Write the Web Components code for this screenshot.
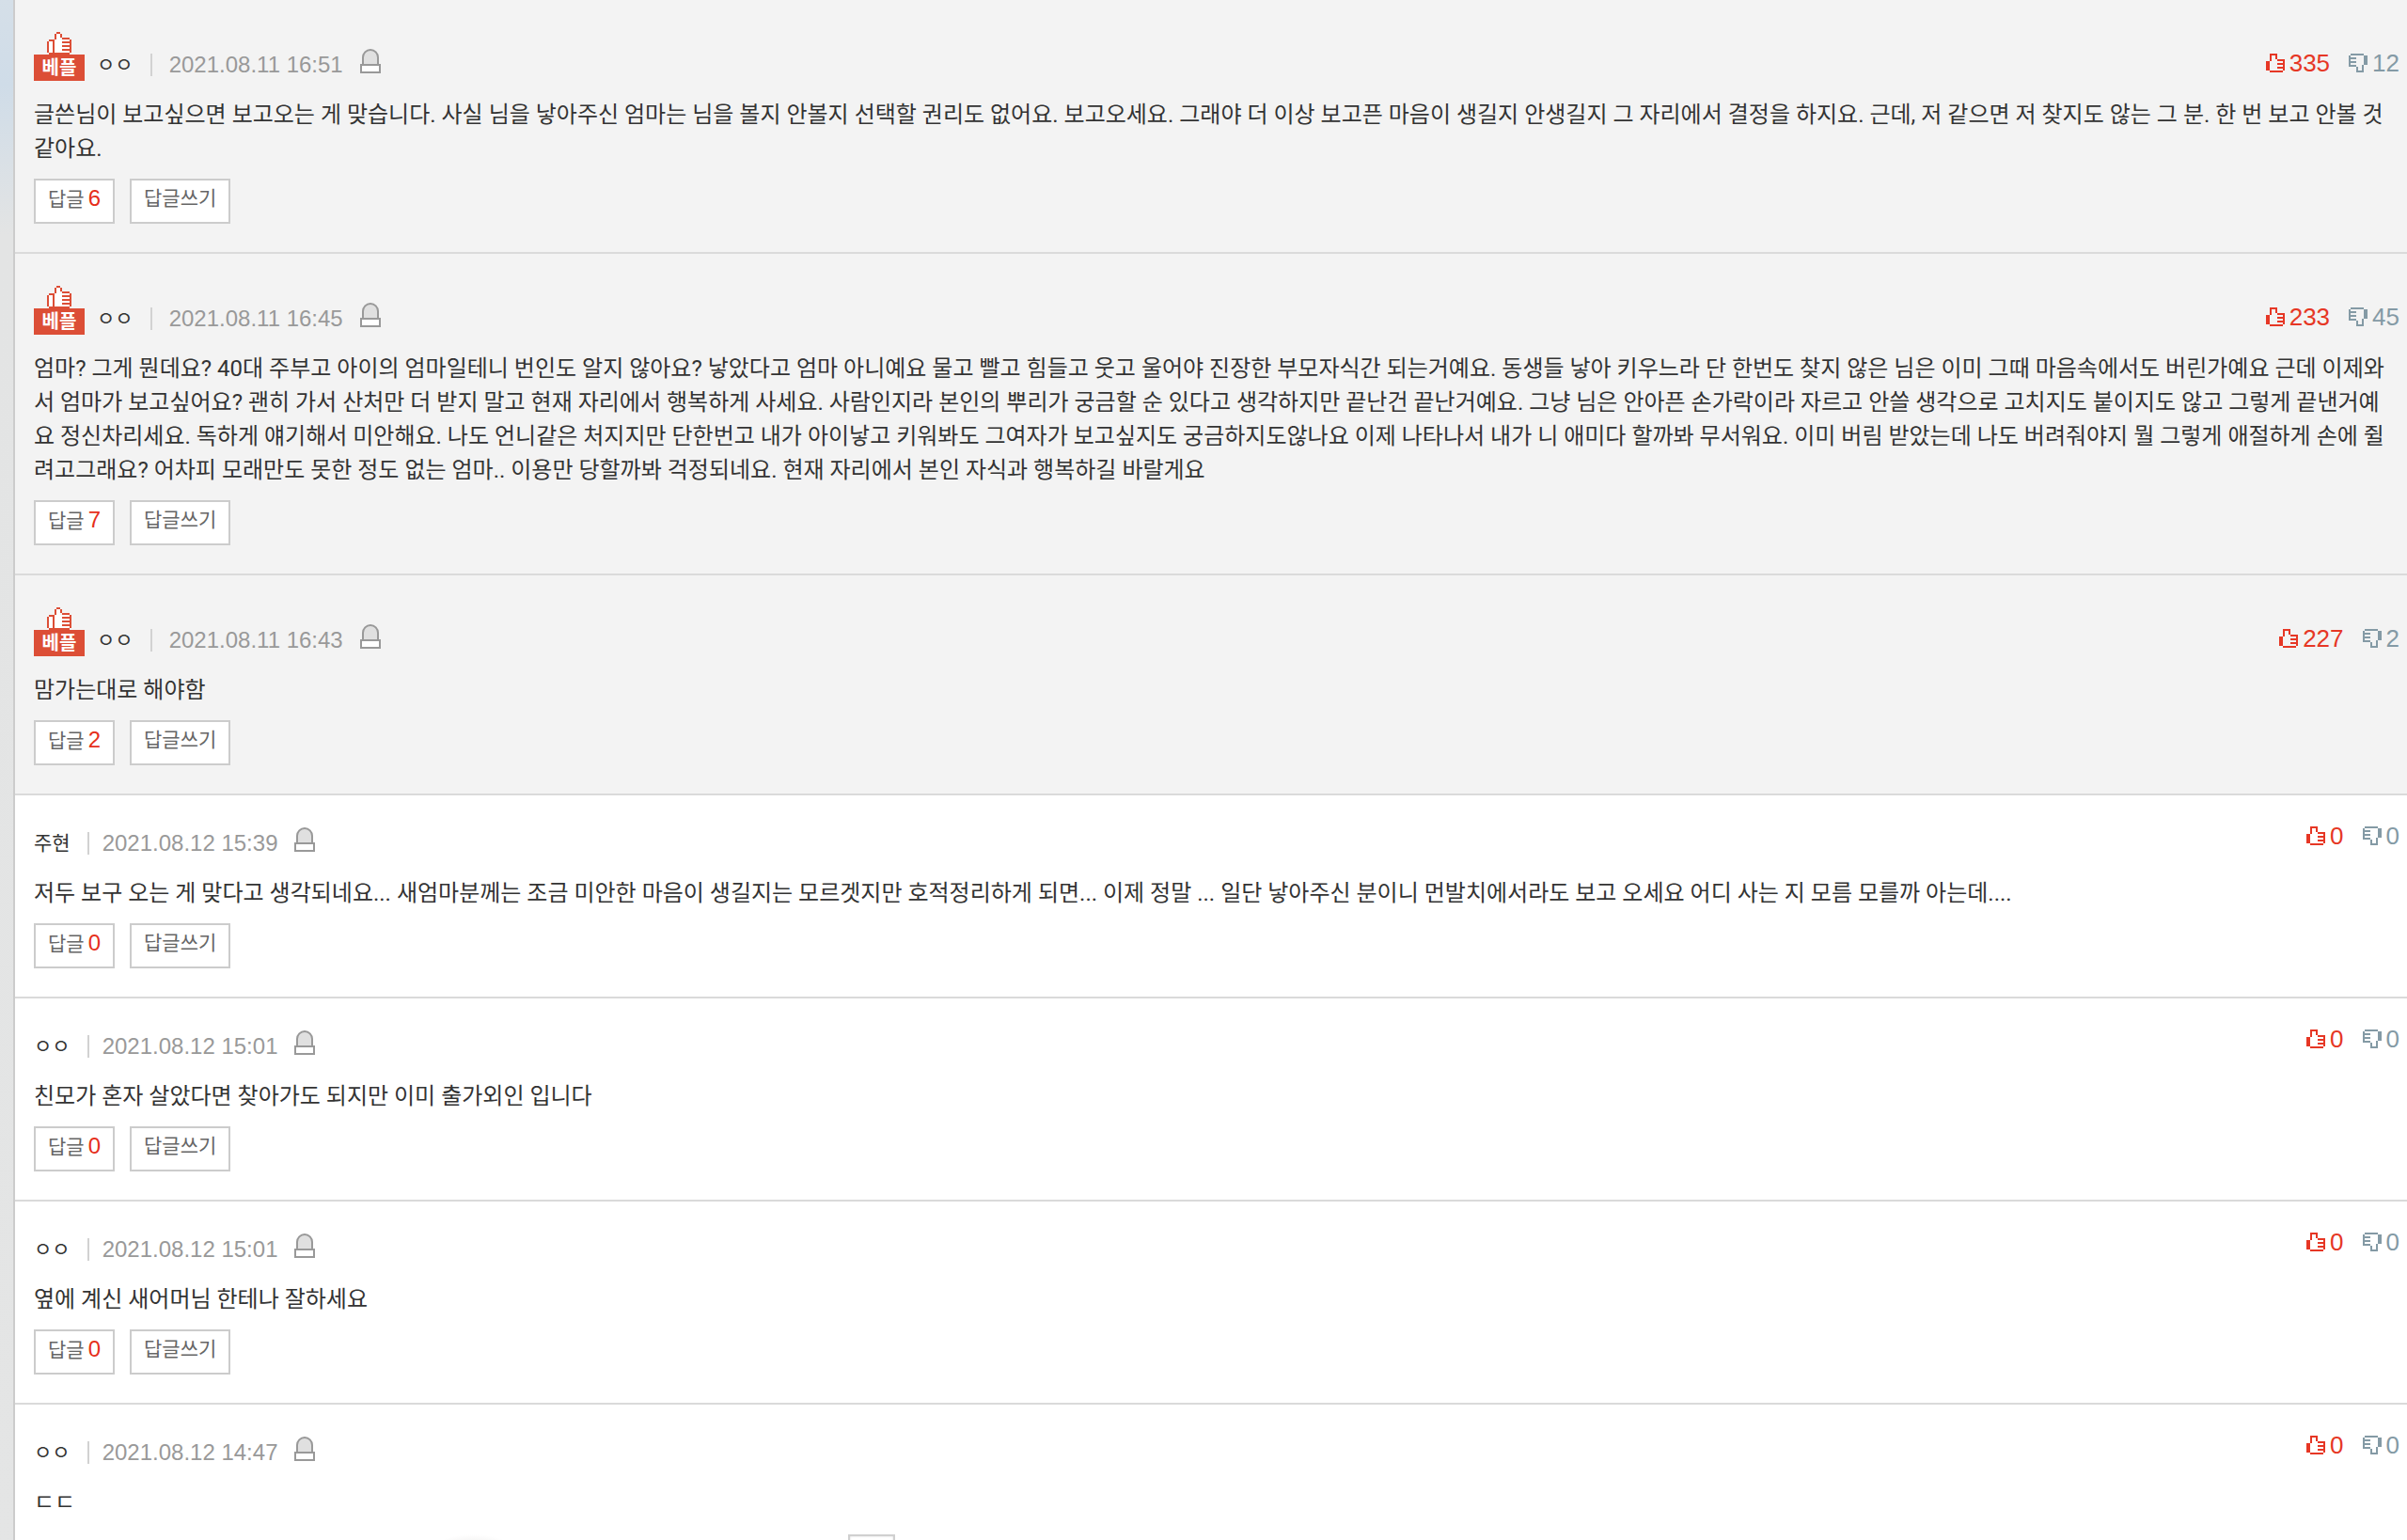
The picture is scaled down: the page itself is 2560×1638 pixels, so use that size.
<!DOCTYPE html>
<html lang="ko">
<head>
<meta charset="utf-8">
<title>댓글</title>
<style>
    body {
        margin: 0;
        background: #ffffff;
        font-family: "Liberation Sans", "Noto Sans CJK KR", sans-serif;
        color: #333333;
    }
</style>
</head>
<body>
<comment-list>
    <comment-item best author="ㅇㅇ" date="2021.08.11 16:51" up="335" down="12" replies="6">글쓴님이 보고싶으면 보고오는 게 맞습니다. 사실 님을 낳아주신 엄마는 님을 볼지 안볼지 선택할 권리도 없어요. 보고오세요. 그래야 더 이상 보고픈 마음이 생길지 안생길지 그 자리에서 결정을 하지요. 근데, 저 같으면 저 찾지도 않는 그 분. 한 번 보고 안볼 것 같아요.</comment-item>
    <comment-item best author="ㅇㅇ" date="2021.08.11 16:45" up="233" down="45" replies="7">엄마? 그게 뭔데요? 40대 주부고 아이의 엄마일테니 번인도 알지 않아요? 낳았다고 엄마 아니예요 물고 빨고 힘들고 웃고 울어야 진장한 부모자식간 되는거예요. 동생들 낳아 키우느라 단 한번도 찾지 않은 님은 이미 그때 마음속에서도 버린가예요 근데 이제와서 엄마가 보고싶어요? 괜히 가서 산처만 더 받지 말고 현재 자리에서 행복하게 사세요. 사람인지라 본인의 뿌리가 궁금할 순 있다고 생각하지만 끝난건 끝난거예요. 그냥 님은 안아픈 손가락이라 자르고 안쓸 생각으로 고치지도 붙이지도 않고 그렇게 끝낸거예요 정신차리세요. 독하게 얘기해서 미안해요. 나도 언니같은 처지지만 단한번고 내가 아이낳고 키워봐도 그여자가 보고싶지도 궁금하지도않나요 이제 나타나서 내가 니 애미다 할까봐 무서워요. 이미 버림 받았는데 나도 버려줘야지 뭘 그렇게 애절하게 손에 쥘려고그래요? 어차피 모래만도 못한 정도 없는 엄마.. 이용만 당할까봐 걱정되네요. 현재 자리에서 본인 자식과 행복하길 바랄게요</comment-item>
    <comment-item best author="ㅇㅇ" date="2021.08.11 16:43" up="227" down="2" replies="2">맘가는대로 해야함</comment-item>
    <comment-item author="주현" date="2021.08.12 15:39" up="0" down="0" replies="0">저두 보구 오는 게 맞다고 생각되네요... 새엄마분께는 조금 미안한 마음이 생길지는 모르겟지만 호적정리하게 되면... 이제 정말 ... 일단 낳아주신 분이니 먼발치에서라도 보고 오세요 어디 사는 지 모름 모를까 아는데....</comment-item>
    <comment-item author="ㅇㅇ" date="2021.08.12 15:01" up="0" down="0" replies="0">친모가 혼자 살았다면 찾아가도 되지만 이미 출가외인 입니다</comment-item>
    <comment-item author="ㅇㅇ" date="2021.08.12 15:01" up="0" down="0" replies="0">옆에 계신 새어머님 한테나 잘하세요</comment-item>
    <comment-item author="ㅇㅇ" date="2021.08.12 14:47" up="0" down="0">ㄷㄷ<banner-strip slot="banner"></banner-strip></comment-item>
</comment-list>

<script>
class bestBadge extends HTMLElement {
    constructor() {
        super();
        this.attachShadow({mode: 'open'});
    }

    getTemplate() {
        const template = document.createElement('template');
        template.innerHTML = `
            <svg width="26" height="24" viewBox="0 0 13 12" shape-rendering="crispEdges" aria-hidden="true">
                <path fill="#ffffff" d="M1 5h3V4h1V1h2v3h5v8H1z"/>
                <path fill="#dc4e36" d="M5 0h2v1H5zM4 1h1v3H4zM7 1h1v2H7zM8 3h4v1H8zM1 4h3v1H1zM0 5h1v6H0zM3 5h1v6H3zM12 4h1v7h-1zM8 5h4v1H8zM8 7h4v1H8zM8 9h4v1H8zM1 11h11v1H1z"/>
            </svg>
            <span>베플</span>
            ${this.getStyle()}
        `
        return template;
    }

    getStyle() {
        return `
            <style>
                :host {
                    display: flex;
                    flex-direction: column;
                    align-items: center;
                    width: 54px;
                    height: 52px;
                }
                svg {
                    display: block;
                }
                span {
                    width: 100%;
                    height: 28px;
                    line-height: 28px;
                    background-color: #dc4e36;
                    color: #ffffff;
                    font-size: 20px;
                    font-weight: bold;
                    text-align: center;
                }
            </style>
        `
    }

    connectedCallback() {
        this.shadowRoot.appendChild(this.getTemplate().content.cloneNode(true))
    }
}

customElements.define('best-badge', bestBadge)

class voteButton extends HTMLElement {
    constructor() {
        super();
        this.attachShadow({mode: 'open'});
        this.type = this.getAttribute('type');
    }

    getIcon() {
        if (this.type == 'up') {
            return `<path d="M2 0h4v1H2zM2 1h1v3H2zM5 1h1v2H5zM6 3h4v1H6zM0 4h2v5H0zM9 4h1v5H9zM6 5h3v1H6zM6 7h3v1H6zM2 9h7v1H2z"/>`
        }
        return `<path d="M1 0h7v1H1zM0 1h1v6H0zM8 1h2v5H8zM1 2h3v1H1zM1 4h3v1H1zM1 6h3v1H1zM4 7h1v3H4zM7 6h1v4H7zM5 9h2v1H5z"/>`
    }

    getTemplate() {
        const template = document.createElement('template');
        template.innerHTML = `
            <button type="button" class="${this.type}" aria-label="${this.type == 'up' ? '추천' : '반대'}">
                <svg width="20" height="20" viewBox="0 0 10 10" fill="currentColor" shape-rendering="crispEdges" aria-hidden="true">${this.getIcon()}</svg>
                <slot></slot>
            </button>
            ${this.getStyle()}
        `
        return template;
    }

    getStyle() {
        return `
            <style>
                :host {
                    display: block;
                }
                button {
                    display: flex;
                    align-items: center;
                    gap: 5px;
                    height: 34px;
                    padding: 0;
                    border: 0;
                    background: none;
                    font: inherit;
                    font-size: 26px;
                    line-height: 34px;
                    cursor: pointer;
                }
                .up {
                    color: #e63725;
                }
                .down {
                    color: #849aa5;
                }
            </style>
        `
    }

    connectedCallback() {
        this.shadowRoot.appendChild(this.getTemplate().content.cloneNode(true))
    }
}

customElements.define('vote-button', voteButton)

class bannerStrip extends HTMLElement {
    constructor() {
        super();
        this.attachShadow({mode: 'open'});
    }

    getTemplate() {
        const template = document.createElement('template');
        template.innerHTML = `
            <div class="picture"></div>
            <div class="box"></div>
            ${this.getStyle()}
        `
        return template;
    }

    getStyle() {
        return `
            <style>
                :host {
                    display: flex;
                    gap: 348px;
                    margin-top: 16px;
                    padding-left: 416px;
                }
                .picture {
                    width: 102px;
                    height: 50px;
                    background: radial-gradient(closest-side, #e0dedc, #ffffff);
                }
                .box {
                    box-sizing: border-box;
                    width: 50px;
                    height: 50px;
                    border: 2px solid #d0d0d0;
                    box-shadow: inset 0 0 2px #d0d0d0;
                }
            </style>
        `
    }

    connectedCallback() {
        this.shadowRoot.appendChild(this.getTemplate().content.cloneNode(true))
    }
}

customElements.define('banner-strip', bannerStrip)

class commentItem extends HTMLElement {
    constructor() {
        super();
        this.attachShadow({mode: 'open'});
        this.best = this.hasAttribute('best');
        this.author = this.getAttribute('author');
        this.date = this.getAttribute('date');
        this.up = this.getAttribute('up');
        this.down = this.getAttribute('down');
        this.replies = this.getAttribute('replies');
    }

    getButtons() {
        if (this.replies === null) return ''
        return `
            <div class="buttons">
                <button type="button">답글<em>${this.replies}</em></button>
                <button type="button">답글쓰기</button>
            </div>
        `
    }

    getTemplate() {
        const template = document.createElement('template');
        template.innerHTML = `
            <article>
                <header>
                    <div class="meta">
                        ${this.best ? '<best-badge></best-badge>' : ''}
                        <span class="author">${this.author}</span>
                        <time>${this.date}</time>
                        <svg class="report" width="22" height="26" viewBox="0 0 22 26" fill="none" stroke="#999999" stroke-width="2" aria-hidden="true">
                            <path fill="#e0e0e0" d="M3 17V9a8 8 0 0 1 16 0v8z"/>
                            <path fill="#ffffff" d="M1 17h20v8H1z"/>
                        </svg>
                    </div>
                    <div class="votes">
                        <vote-button type="up">${this.up}</vote-button>
                        <vote-button type="down">${this.down}</vote-button>
                    </div>
                </header>
                <p><slot></slot></p>
                ${this.getButtons()}
                <slot name="banner"></slot>
            </article>
            ${this.getStyle()}
        `
        return template;
    }

    getStyle() {
        return `
            <style>
                :host {
                    display: block;
                    border-bottom: 2px solid #dadada;
                }
                :host([best]) {
                    background-color: #f3f3f3;
                }
                article {
                    padding: 26px 8px 30px 20px;
                }
                header {
                    display: flex;
                    justify-content: space-between;
                    align-items: flex-start;
                    margin-bottom: 18px;
                }
                .meta {
                    display: flex;
                    align-items: flex-end;
                    margin-top: 8px;
                    line-height: 34px;
                }
                best-badge {
                    margin-right: 13px;
                }
                .author {
                    font-size: 21px;
                }
                time {
                    display: flex;
                    align-items: center;
                    font-size: 24px;
                    color: #999999;
                }
                time::before {
                    content: "";
                    width: 2px;
                    height: 24px;
                    margin: 0 14px 0 18px;
                    background-color: #d2d2d2;
                }
                :host([best]) time::before {
                    margin-right: 18px;
                }
                .report {
                    margin: 0 0 8px 18px;
                }
                .votes {
                    display: flex;
                    gap: 20px;
                }
                :host([best]) .votes {
                    margin-top: 24px;
                }
                p {
                    margin: 0;
                    padding-right: 8px;
                    font-family: Roboto, "Noto Sans CJK KR", sans-serif;
                    font-size: 24px;
                    line-height: 36px;
                }
                .buttons {
                    display: flex;
                    gap: 16px;
                    margin-top: 14px;
                }
                button {
                    height: 48px;
                    padding: 0 13px 6px;
                    border: 2px solid #cccccc;
                    background-color: #ffffff;
                    color: #666666;
                    font: inherit;
                    font-size: 21px;
                    line-height: 38px;
                    cursor: pointer;
                }
                em {
                    margin-left: 4px;
                    font-size: 24px;
                    font-style: normal;
                    color: #e62e1a;
                }
            </style>
        `
    }

    connectedCallback() {
        this.shadowRoot.appendChild(this.getTemplate().content.cloneNode(true))
    }
}

customElements.define('comment-item', commentItem)

class commentList extends HTMLElement {
    constructor() {
        super();
        this.attachShadow({mode: 'open'});
    }

    getTemplate() {
        const template = document.createElement('template');
        template.innerHTML = `
            <aside></aside>
            <main><slot></slot></main>
            ${this.getStyle()}
        `
        return template;
    }

    getStyle() {
        return `
            <style>
                :host {
                    display: grid;
                    grid-template-columns: 14px minmax(0, 1fr);
                    height: 100vh;
                    overflow: hidden;
                }
                aside {
                    background: linear-gradient(#d5dfe8, #cfdce8 90px, #e3e4e4 250px, #e4e5e5);
                }
                main {
                    border-left: 2px solid #cccccc;
                }
            </style>
        `
    }

    connectedCallback() {
        this.shadowRoot.appendChild(this.getTemplate().content.cloneNode(true))
    }
}

customElements.define('comment-list', commentList)
</script>
</body>
</html>
